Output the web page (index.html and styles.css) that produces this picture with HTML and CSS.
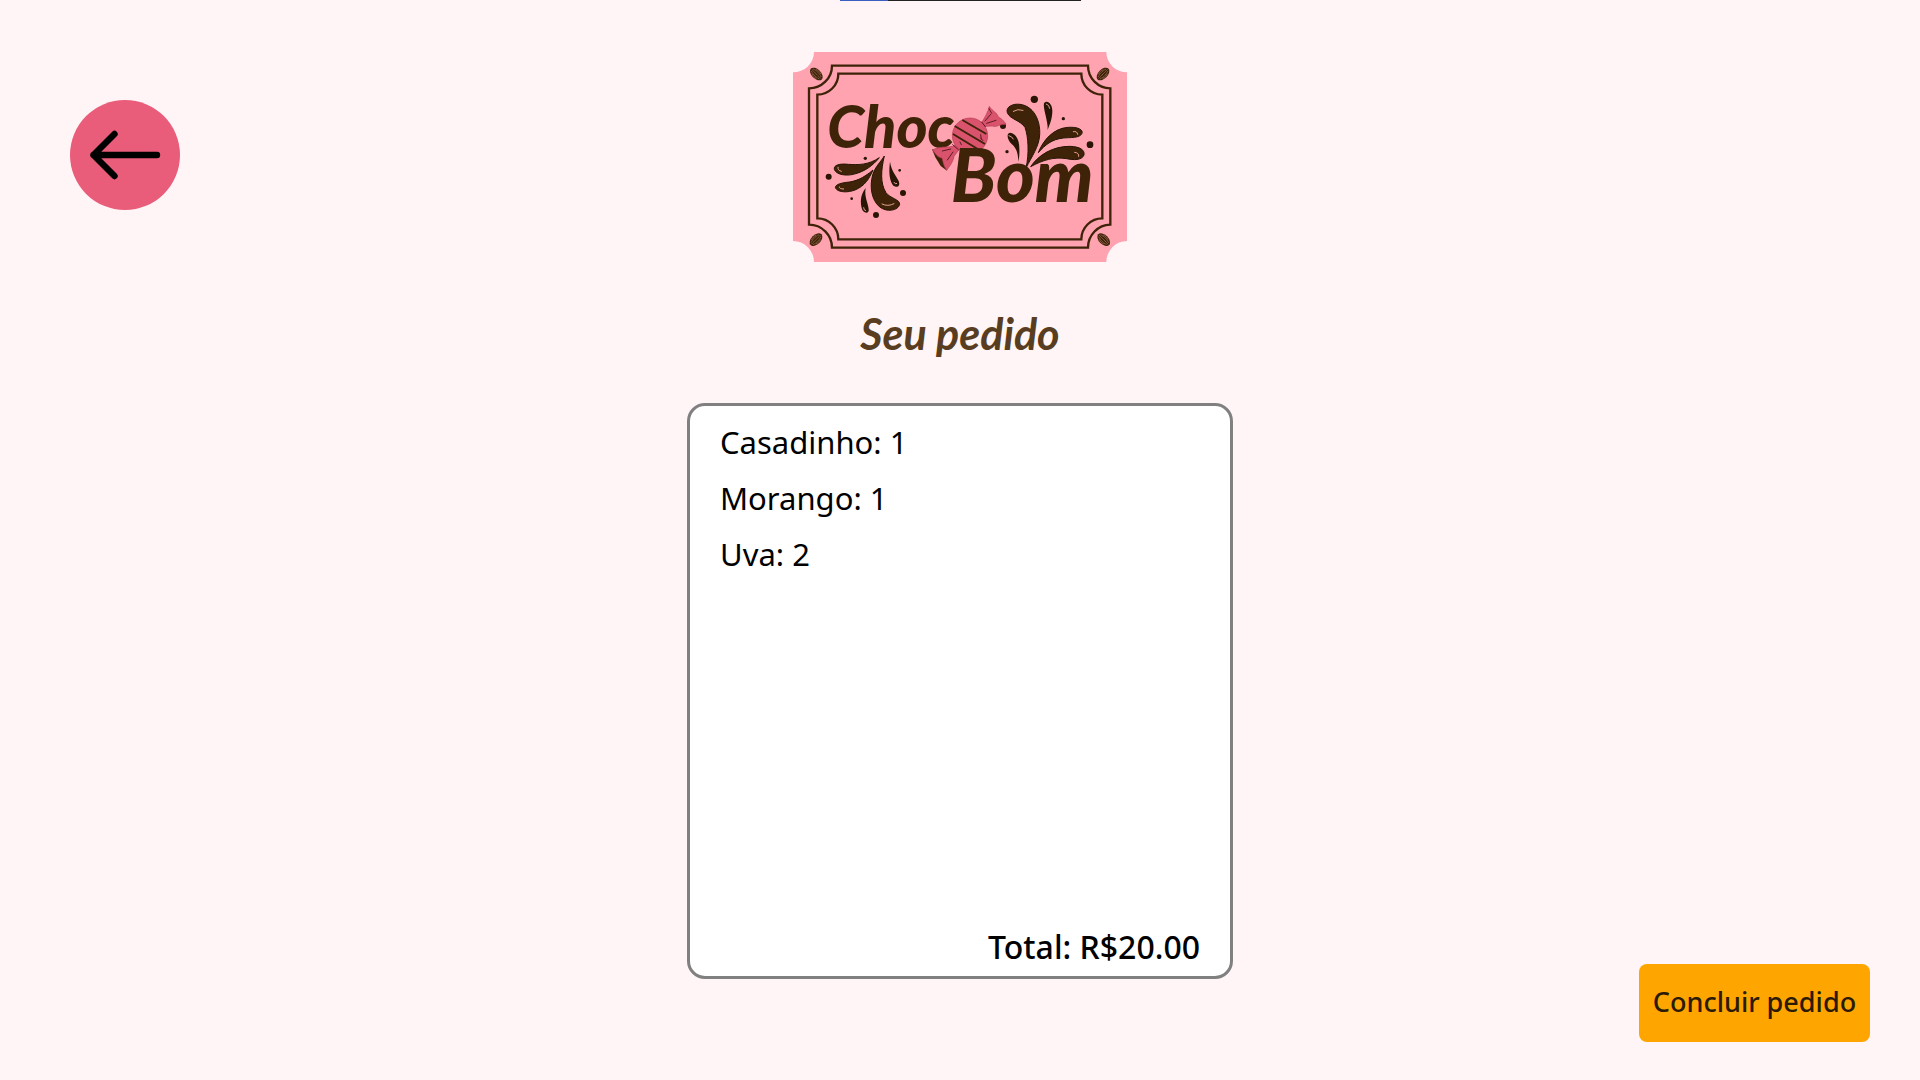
FILE: index.html
```html
<!DOCTYPE html>
<html lang="pt-BR">
<head>
<meta charset="utf-8">
<meta name="viewport" content="width=device-width, initial-scale=1">
<title>Choco Bom - Seu pedido</title>
<link rel="stylesheet" href="styles.css">
</head>
<body>
<div class="top-strip"></div>
<div class="page">
  <nav class="side side-left">
    <a class="back" href="#" aria-label="Voltar">
      <svg viewBox="0 0 110 110" fill="none" stroke="#000" stroke-width="6.4" stroke-linecap="round" stroke-linejoin="round"><path d="M87 55H23.500M44.500 34L23.500 55L44.500 76"/></svg>
    </a>
  </nav>
  <main class="order">
    <svg class="logo" viewBox="39 36 1002 630" role="img" aria-label="Choco Bom">
      <defs>
        <g id="cocoa">
          <ellipse rx="23" ry="14" fill="#3e2308"/>
          <path d="M-19 0H19M-17-4Q0-10 17-4M-17 4Q0 10 17 4M-10-9Q0-13 10-9M-10 9Q0 13 10 9" fill="none" stroke="#b8806a" stroke-width="2" stroke-dasharray="4 1"/>
        </g>
      </defs>
      <path fill="#ffa3b0" d="M102 36H979A62 61 0 0 0 1041 97V603A62 63 0 0 0 979 666H102A63 63 0 0 0 39 603V97A63 61 0 0 0 102 36Z"/>
      <g fill="none" stroke="#3e2308" stroke-width="7">
        <path d="M156 77H924A68 68 0 0 0 991 145V554A68 69 0 0 0 924 623H156A69 69 0 0 0 87 554V145A69 68 0 0 0 156 77Z"/>
        <path d="M175 101H904A63 63 0 0 0 967 164V535A63 63 0 0 0 904 598H175A63 63 0 0 0 112 535V164A63 63 0 0 0 175 101Z"/>
      </g>
      <use href="#cocoa" transform="translate(109 102) rotate(45)"/>
      <use href="#cocoa" transform="translate(969 102) rotate(-45)"/>
      <use href="#cocoa" transform="translate(108 599) rotate(-45)"/>
      <use href="#cocoa" transform="translate(971 599) rotate(45)"/>
      <text class="logo-choc" x="142" y="325">Choc</text>
      <g fill="#3e2308" stroke="#291505" stroke-width="3">
        <path d="M738 384C748 340 745 290 735 262C720 240 690 238 682 218C676 200 700 190 720 193C760 198 782 240 779 285C777 320 755 350 738 384Z"/>
        <path d="M775 338C790 300 820 265 865 262C895 260 910 270 906 280C900 295 870 292 850 294C815 298 795 315 775 338Z"/>
        <path d="M752 380C775 345 820 318 870 319C900 320 915 330 912 345C905 362 880 360 860 356C820 350 790 360 752 380Z"/>
        <path d="M313 348C303 390 300 430 318 458C330 475 360 478 359 493C355 512 320 518 298 500C275 480 268 440 278 405C285 380 303 365 313 348Z"/>
        <path d="M298 353C265 375 235 375 205 373C180 370 160 375 163 388C168 405 200 408 220 403C255 395 280 375 298 353Z"/>
        <path d="M279 390C250 415 225 425 200 427C175 430 163 437 167 445C175 458 205 458 225 450C255 438 268 415 279 390Z"/>
      </g>
      <g fill="#291505">
        <path d="M803 270C805 245 788 205 792 190C800 178 818 190 817 215C816 240 808 255 803 270Z"/>
        <path d="M715 365C714 340 710 325 695 312C682 300 678 280 690 278C708 280 718 300 718 325C719 345 717 355 715 365Z"/>
        <path d="M257 444C240 465 240 490 247 510C255 522 268 520 266 508C265 490 252 470 257 444Z"/>
        <path d="M330 365C325 400 330 425 340 437C352 445 362 438 356 423C348 405 335 395 330 365Z"/>
        <circle cx="763" cy="178" r="11"/><circle cx="850" cy="236" r="5"/><circle cx="930" cy="314" r="10"/><circle cx="669" cy="258" r="9"/><circle cx="681" cy="335" r="5"/><circle cx="800" cy="377" r="5"/>
        <circle cx="256" cy="355" r="5"/><circle cx="146" cy="410" r="9"/><circle cx="359" cy="391" r="4"/><circle cx="369" cy="459" r="9"/><circle cx="215" cy="476" r="4"/><circle cx="288" cy="525" r="9"/>
      </g>
      <path fill="none" stroke="#e3a08f" stroke-width="3" stroke-linecap="round" d="M700 214Q713 205 729 211M880 275Q892 272 893 283M884 337Q898 338 896 349M799 192Q808 194 809 205M687 287Q696 289 700 297M306 492Q324 501 342 491M174 382Q172 391 184 394M178 441Q177 447 191 447M251 503Q251 512 257 512M342 427Q345 434 350 431"/>
      <path fill="#3e2308" d="M456 328L466 352L482 378L501 392L505 366L488 335Z"/>
      <g fill="#d9536c" stroke="#b53c55" stroke-width="2" stroke-linejoin="round">
        <path d="M603 251C615 232 624 217 628 199C639 216 650 216 655 231C664 235 673 244 678 253C660 252 649 263 637 258L616 259Z"/>
        <path d="M528 316C505 325 479 317 458 330C466 342 473 352 486 354C490 368 491 378 500 390C511 378 522 358 522 349L537 329Z"/>
        <circle cx="570" cy="287" r="53"/>
      </g>
      <path fill="none" stroke="#3e2308" stroke-width="6" d="M547 240L619 282M524 258L615 312M519 282L593 327"/>
      <path fill="none" stroke="#5e1b27" stroke-width="3" stroke-linecap="round" d="M605 246L616 260M518 314L535 329M615 243L632 223M620 250L648 241M627 206L635 220M512 327L487 333M519 336L502 360M602 284L604 298M540 306L544 314M602 294L609 302"/>
      <text class="logo-bom" x="512" y="487">Bom</text>
    </svg>
    <h1 class="title">Seu pedido</h1>
    <section class="card">
      <ul class="items">
        <li>Casadinho: 1</li>
        <li>Morango: 1</li>
        <li>Uva: 2</li>
      </ul>
      <p class="total">Total: R$20.00</p>
    </section>
  </main>
  <div class="side side-right">
    <button class="finish" type="button">Concluir pedido</button>
  </div>
</div>
</body>
</html>
```
FILE: styles.css
```css
* { box-sizing: border-box; }
body {
  margin: 0;
  background: #fff5f7;
  color: #000;
  font-family: "Noto Sans", sans-serif;
}
.top-strip {
  position: absolute;
  top: 0;
  left: 50%;
  width: 241px;
  height: 1px;
  margin-left: -120px;
  background: linear-gradient(to right, #3b5fc0 20%, #222 20%);
}
.page {
  display: grid;
  grid-template-columns: 1fr minmax(auto, 546px) 1fr;
  min-height: 100vh;
}
.side { display: flex; }
.side-left { align-items: flex-start; padding: 100px 0 0 70px; }
.side-right { align-items: flex-end; justify-content: flex-end; padding: 0 50px 38px 0; }
.back {
  display: block;
  width: 110px;
  height: 110px;
  border-radius: 50%;
  background: #e95d7a;
}
.back svg { display: block; }
.order {
  display: flex;
  flex-direction: column;
  align-items: center;
  padding: 52px 0 101px;
}
.logo { display: block; width: 334px; height: 210px; }
.logo text {
  font-family: Lato, sans-serif;
  font-style: italic;
  font-weight: 900;
  fill: #3e2308;
}
.logo-choc { font-size: 178px; }
.logo-bom { font-size: 222px; }
.title {
  margin: 42px 0 39px;
  color: #593d20;
  font: italic 700 43px/60px Lato, sans-serif;
}
.card {
  display: flex;
  flex: 1;
  flex-direction: column;
  justify-content: space-between;
  width: 100%;
  padding: 8px 30px 1px;
  border: 3px solid #808080;
  border-radius: 18px;
  background: #fff;
}
.items { margin: 0; padding: 0; list-style: none; font-size: 31px; line-height: 56px; }
.total { margin: 0; text-align: right; font-size: 32px; font-weight: 500; line-height: 56px; }
.finish {
  width: 231px;
  height: 78px;
  padding: 0 0 2px;
  border: 0;
  border-radius: 8px;
  background: #ffa500;
  color: #2b1a06;
  font: 500 27px/40px "Noto Sans", sans-serif;
}
```
